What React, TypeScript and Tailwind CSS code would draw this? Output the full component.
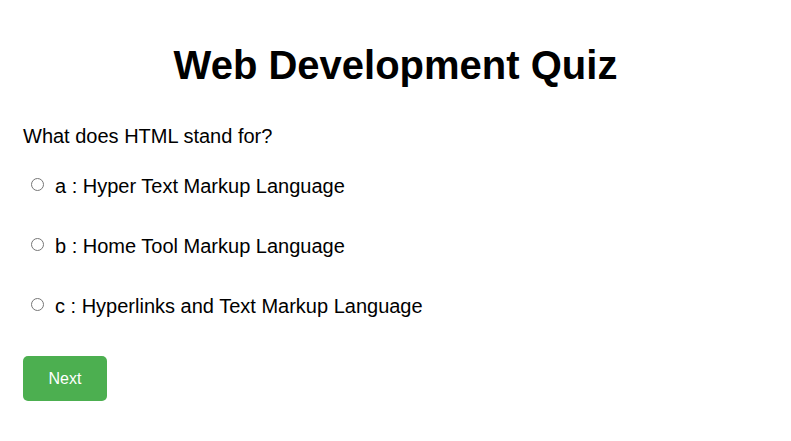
import { useState } from "react";

const options = [
  { key: "a", text: "Hyper Text Markup Language" },
  { key: "b", text: "Home Tool Markup Language" },
  { key: "c", text: "Hyperlinks and Text Markup Language" },
];

export default function App() {
  const [answer, setAnswer] = useState("");

  return (
    <div className="min-h-screen bg-white px-[23px] text-black [font-family:'Liberation_Sans',Arial,sans-serif]">
      <h1 className="pt-[42px] text-center text-[40px] font-bold leading-[46px]">
        Web Development Quiz
      </h1>

      <p className="mt-[36px] text-[20px] leading-[24px]">What does HTML stand for?</p>

      <div className="mt-[26px] flex flex-col gap-[36px]">
        {options.map((opt) => (
          <label key={opt.key} className="flex items-start text-[20px] leading-[24px]">
            <input
              type="radio"
              name="quiz"
              value={opt.key}
              checked={answer === opt.key}
              onChange={() => setAnswer(opt.key)}
              className="ml-[8px] mt-[4px] h-[13px] w-[13px]"
            />
            <span className="ml-[11px]">
              {opt.key} : {opt.text}
            </span>
          </label>
        ))}
      </div>

      <button className="mt-[38px] h-[45px] w-[84px] rounded-[5px] bg-[#4caf50] text-[16px] text-white">
        Next
      </button>
    </div>
  );
}
